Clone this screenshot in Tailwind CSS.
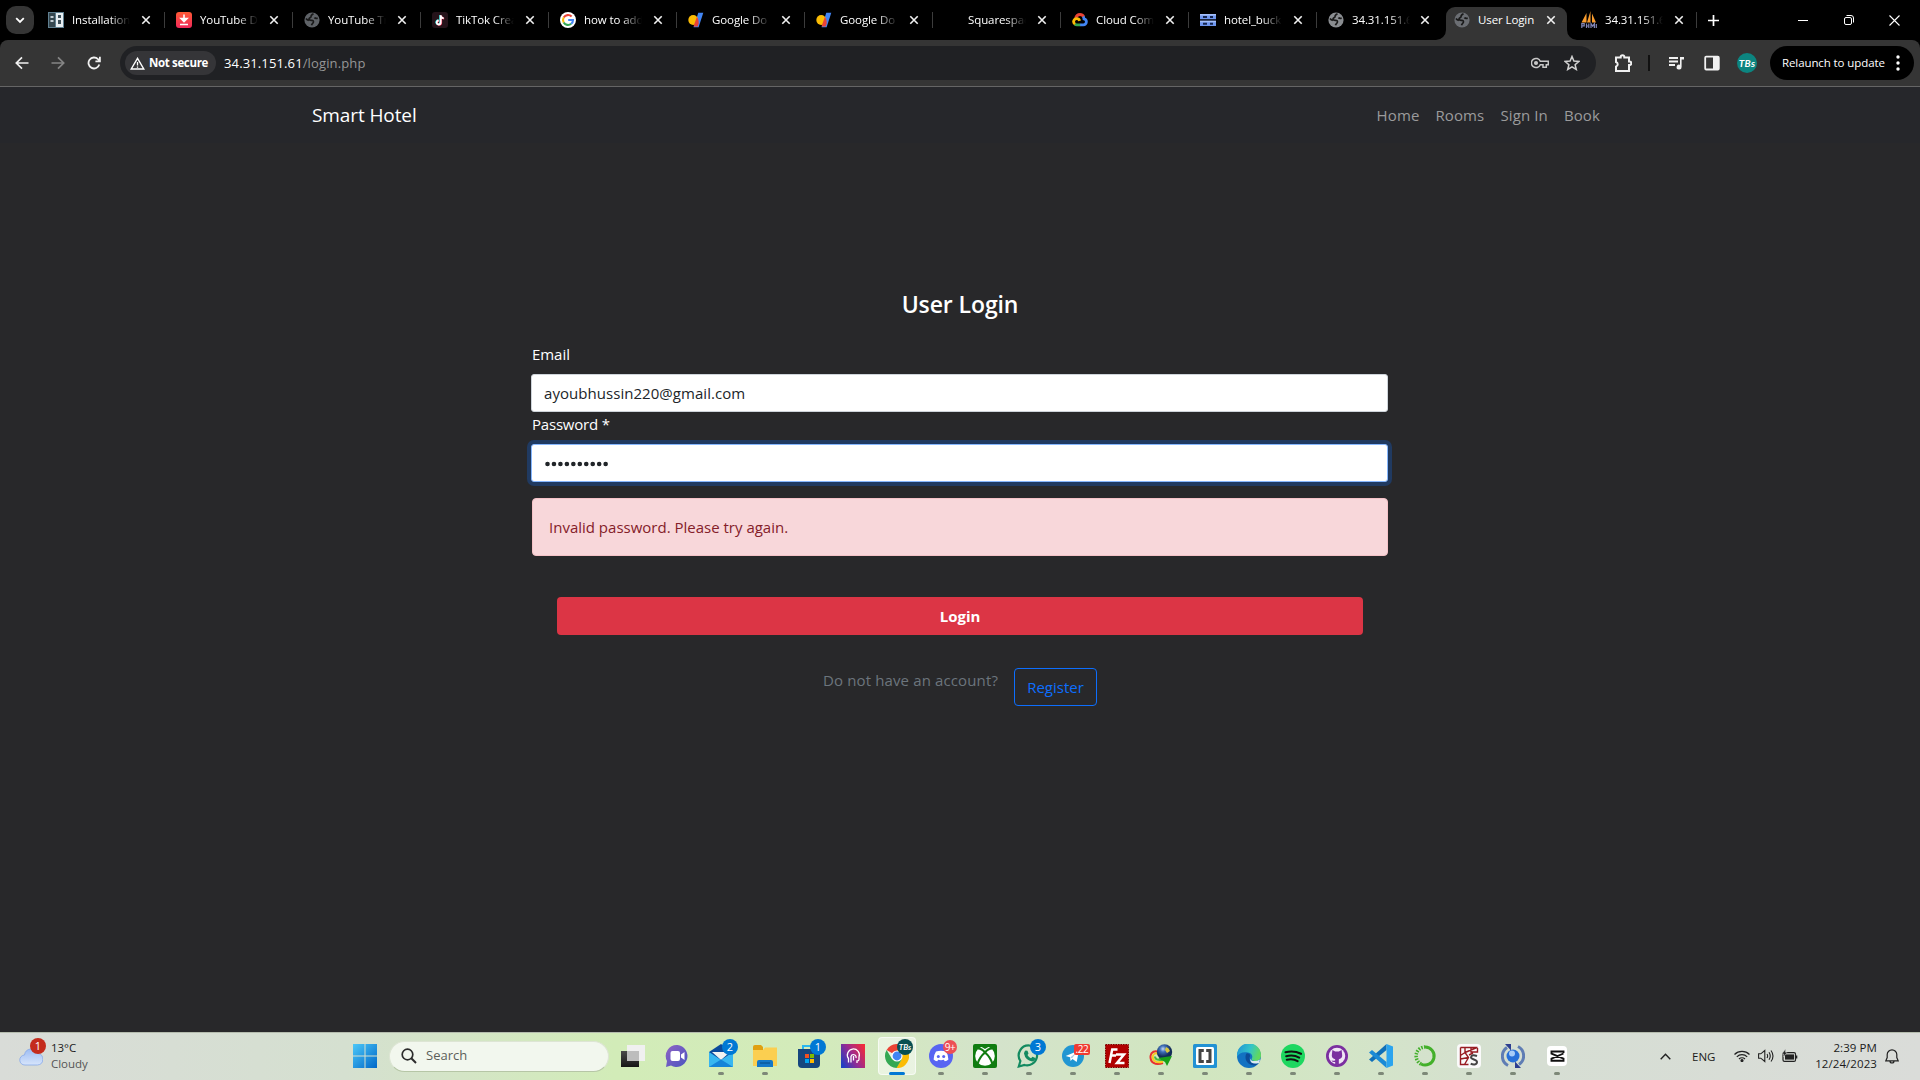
<!DOCTYPE html>
<html lang="en">
<head>
<meta charset="utf-8">
<title>User Login</title>
<script src="https://cdn.jsdelivr.net/npm/@tailwindcss/browser@4"></script>
</head>
<body class="w-[1920px] h-[1080px] overflow-hidden flex flex-col bg-[#28282a] font-['Open_Sans',sans-serif]">
<svg class="hidden">
  <defs>
    <symbol id="x" viewBox="0 0 10 10"><path d="M1.3 1.3l7.4 7.4M8.7 1.3L1.3 8.7" stroke="#f1f1f1" stroke-width="1.6" fill="none"/></symbol>
    <symbol id="globe" viewBox="0 0 16 16"><circle cx="8" cy="8" r="7.6" fill="currentColor"/><path d="M9.500 1.800c-1.500.7-2.600 1.500-2.300 2.600.3 1-2 1-2.200 2.400-.1 1.300 1 1.600 2.600 1.500 1.500-.1 2 .6 1.800 1.800-.2 1.200-1.500 1.600-1.900 3.200M2 6.500c.8 1.200 1.600 1.700 2.800 1.800M10.500 5.500c.5.9 1.800.9 3.200.6" stroke="#191919" stroke-width="1.700" fill="none"/></symbol>
    <symbol id="domains" viewBox="0 0 16 16"><path d="M10.300.8h5L10.600 15.200H5.600z" fill="#4285f4"/><circle cx="5.200" cy="8" r="4.900" fill="#fbbc04"/><path d="M8.800 4.900l-3.300 9.500h4.200l1-3.200C10.800 8.500 10 6 8.800 4.900z" fill="#ea4335"/></symbol>
  </defs>
</svg>

<!-- Tab strip -->
<header class="h-10 shrink-0 bg-black flex text-white text-[11.5px] tracking-[-0.1px]">
  <div class="w-[37px] pt-[6px] shrink-0 flex justify-end pr-[3px]">
    <div class="w-7 h-7 rounded-[10px] bg-[#353535] flex items-center justify-center"><svg class="w-[10px] h-[10px]" viewBox="0 0 10 10"><path d="M1.200 3.200L5 7l3.800-3.800" stroke="#fff" stroke-width="1.800" fill="none"/></svg></div>
  </div>
  <div class="w-[128px] h-10 shrink-0 pl-[11px] flex items-center relative">
    <svg class="w-4 h-4 shrink-0" viewBox="0 0 16 16"><path fill="#5f7f90" d="M0 0h16v16H0z"/><path d="M1 1h6v14H1z" fill="#35474f"/><path d="M8 1h7v14H8z" fill="#e8eef2"/><path d="M2.500 4h3v2h-3zm0 4h3v2h-3z" fill="#c3ced5"/><path d="M10 3h3v3h-3zm0 5h3v4h-3z" fill="#3d4f58"/></svg>
    <span class="ml-2 w-[58px] overflow-hidden whitespace-nowrap [mask-image:linear-gradient(to_right,black_65%,transparent)]">Installation</span>
    <svg class="w-[10px] h-[10px] shrink-0 ml-[11px]"><use href="#x"/></svg><i class="absolute right-0 top-3 w-px h-4 bg-[#3c3c3c]"></i>
  </div>
  <div class="w-[128px] h-10 shrink-0 pl-[11px] flex items-center relative">
    <svg class="w-4 h-4 shrink-0" viewBox="0 0 16 16"><defs><linearGradient id="dl" x2="0" y2="1"><stop stop-color="#ff5a35"/><stop offset="1" stop-color="#f0285a"/></linearGradient></defs><rect width="16" height="16" rx="3" fill="url(#dl)"/><path d="M8 2.500v6M5 6.500l3 3 3-3zM4 12.500h8" stroke="#fff" stroke-width="1.600" fill="#fff"/></svg>
    <span class="ml-2 w-[58px] overflow-hidden whitespace-nowrap [mask-image:linear-gradient(to_right,black_65%,transparent)]">YouTube D</span>
    <svg class="w-[10px] h-[10px] shrink-0 ml-[11px]"><use href="#x"/></svg><i class="absolute right-0 top-3 w-px h-4 bg-[#3c3c3c]"></i>
  </div>
  <div class="w-[128px] h-10 shrink-0 pl-[11px] flex items-center relative">
    <svg class="w-4 h-4 shrink-0 text-[#5f6368]"><use href="#globe"/></svg>
    <span class="ml-2 w-[58px] overflow-hidden whitespace-nowrap [mask-image:linear-gradient(to_right,black_65%,transparent)]">YouTube Tr</span>
    <svg class="w-[10px] h-[10px] shrink-0 ml-[11px]"><use href="#x"/></svg><i class="absolute right-0 top-3 w-px h-4 bg-[#3c3c3c]"></i>
  </div>
  <div class="w-[128px] h-10 shrink-0 pl-[11px] flex items-center relative">
    <svg class="w-4 h-4 shrink-0" viewBox="0 0 16 16"><rect width="16" height="16" rx="3" fill="#25131a"/><g fill="none" stroke-width="1.800"><path d="M8.200 3v7.200a2 2 0 1 1-2-2M8.200 3.500c.2 1.600 1.400 2.500 3 2.600" stroke="#25f4ee"/><path d="M9.200 3.600v7.200a2 2 0 1 1-2-2M9.200 4c.2 1.600 1.400 2.500 3 2.600" stroke="#fe2c55"/><path d="M8.700 3.200v7.300a2 2 0 1 1-2-2M8.700 3.700c.2 1.600 1.400 2.500 3 2.600" stroke="#fff"/></g></svg>
    <span class="ml-2 w-[58px] overflow-hidden whitespace-nowrap [mask-image:linear-gradient(to_right,black_65%,transparent)]">TikTok Crea</span>
    <svg class="w-[10px] h-[10px] shrink-0 ml-[11px]"><use href="#x"/></svg><i class="absolute right-0 top-3 w-px h-4 bg-[#3c3c3c]"></i>
  </div>
  <div class="w-[128px] h-10 shrink-0 pl-[11px] flex items-center relative">
    <svg class="w-4 h-4 shrink-0" viewBox="0 0 16 16"><circle cx="8" cy="8" r="8" fill="#fff"/><g fill="none" stroke-width="2.100"><path d="M11.600 4.600A5 5 0 0 0 3.700 5.500" stroke="#ea4335"/><path d="M3.700 5.500a5 5 0 0 0 0 5" stroke="#fbbc05"/><path d="M3.700 10.500a5 5 0 0 0 7.500 1.300" stroke="#34a853"/><path d="M11.200 11.800A5 5 0 0 0 13 8H8.200" stroke="#4285f4"/></g></svg>
    <span class="ml-2 w-[58px] overflow-hidden whitespace-nowrap [mask-image:linear-gradient(to_right,black_65%,transparent)]">how to add</span>
    <svg class="w-[10px] h-[10px] shrink-0 ml-[11px]"><use href="#x"/></svg><i class="absolute right-0 top-3 w-px h-4 bg-[#3c3c3c]"></i>
  </div>
  <div class="w-[128px] h-10 shrink-0 pl-[11px] flex items-center relative">
    <svg class="w-4 h-[18px] shrink-0"><use href="#domains"/></svg>
    <span class="ml-2 w-[58px] overflow-hidden whitespace-nowrap [mask-image:linear-gradient(to_right,black_65%,transparent)]">Google Do</span>
    <svg class="w-[10px] h-[10px] shrink-0 ml-[11px]"><use href="#x"/></svg><i class="absolute right-0 top-3 w-px h-4 bg-[#3c3c3c]"></i>
  </div>
  <div class="w-[128px] h-10 shrink-0 pl-[11px] flex items-center relative">
    <svg class="w-4 h-[18px] shrink-0"><use href="#domains"/></svg>
    <span class="ml-2 w-[58px] overflow-hidden whitespace-nowrap [mask-image:linear-gradient(to_right,black_65%,transparent)]">Google Do</span>
    <svg class="w-[10px] h-[10px] shrink-0 ml-[11px]"><use href="#x"/></svg><i class="absolute right-0 top-3 w-px h-4 bg-[#3c3c3c]"></i>
  </div>
  <div class="w-[128px] h-10 shrink-0 pl-[11px] flex items-center relative">
    <span class="w-4 h-4 shrink-0"></span>
    <span class="ml-2 w-[58px] overflow-hidden whitespace-nowrap [mask-image:linear-gradient(to_right,black_65%,transparent)]">Squarespac</span>
    <svg class="w-[10px] h-[10px] shrink-0 ml-[11px]"><use href="#x"/></svg><i class="absolute right-0 top-3 w-px h-4 bg-[#3c3c3c]"></i>
  </div>
  <div class="w-[128px] h-10 shrink-0 pl-[11px] flex items-center relative">
    <svg class="w-4 h-4 shrink-0" viewBox="0 0 16 16" fill="none" stroke-width="2.800"><path d="M3.600 6.200C4.300 3.600 6 2.500 8 2.500c1.600 0 3 .8 3.800 2.300" stroke="#ea4335"/><path d="M11.200 4.600c.5.800.7 1.300.8 2.300 1.600.4 2.400 1.500 2.400 2.800 0 1.800-1.400 3.100-3.100 3.100H8" stroke="#4285f4"/><path d="M8.200 12.800H4.800c-.8 0-1.500-.3-2-.7" stroke="#34a853"/><path d="M3 12.200c-1.300-1-1.600-2.400-1.200-3.500C2.300 7.300 3.500 6.600 4.800 6.600c1.500 0 2.500 1 2.800 2.200" stroke="#fbbc05"/></svg>
    <span class="ml-2 w-[58px] overflow-hidden whitespace-nowrap [mask-image:linear-gradient(to_right,black_65%,transparent)]">Cloud Com</span>
    <svg class="w-[10px] h-[10px] shrink-0 ml-[11px]"><use href="#x"/></svg><i class="absolute right-0 top-3 w-px h-4 bg-[#3c3c3c]"></i>
  </div>
  <div class="w-[128px] h-10 shrink-0 pl-[11px] flex items-center relative">
    <svg class="w-4 h-4 shrink-0" viewBox="0 0 16 16"><path d="M0 2h16v5.300H0zM0 8.700h16V14H0z" fill="#6f96ee"/><path d="M0 2h16v1.500H0zM0 8.700h16v1.500H0z" fill="#a5c0fa"/><path d="M3 4h4v2H3zm7 0h3v2h-3zM3 10.700h4v2H3zm7 0h3v2h-3z" fill="#14254f"/></svg>
    <span class="ml-2 w-[58px] overflow-hidden whitespace-nowrap [mask-image:linear-gradient(to_right,black_65%,transparent)]">hotel_buck</span>
    <svg class="w-[10px] h-[10px] shrink-0 ml-[11px]"><use href="#x"/></svg><i class="absolute right-0 top-3 w-px h-4 bg-[#3c3c3c]"></i>
  </div>
  <div class="w-[129px] h-10 shrink-0 pl-[11px] flex items-center">
    <svg class="w-4 h-4 shrink-0 text-[#8a8d91]"><use href="#globe"/></svg>
    <span class="ml-2 w-[58px] overflow-hidden whitespace-nowrap [mask-image:linear-gradient(to_right,black_65%,transparent)]">34.31.151.6</span>
    <svg class="w-[10px] h-[10px] shrink-0 ml-[10px]"><use href="#x"/></svg>
  </div>
  <div class="w-[121px] shrink-0 mt-[7px] h-[33px] pb-[7px] pl-[8px] bg-[#353535] rounded-t-[9px] flex items-center relative">
    <svg class="absolute left-[-10px] bottom-0 w-[10px] h-[10px]" viewBox="0 0 10 10"><path d="M10 0v10H0A10 10 0 0 0 10 0z" fill="#353535"/></svg>
    <svg class="absolute right-[-10px] bottom-0 w-[10px] h-[10px]" viewBox="0 0 10 10"><path d="M0 0v10h10A10 10 0 0 1 0 0z" fill="#353535"/></svg>
    <svg class="w-4 h-4 shrink-0 text-[#6b6e73]"><use href="#globe"/></svg>
    <span class="ml-2 w-[58px] whitespace-nowrap">User Login</span>
    <svg class="w-[10px] h-[10px] shrink-0 ml-[10px]"><use href="#x"/></svg>
  </div>
  <div class="w-[130px] h-10 shrink-0 pl-[14px] flex items-center relative">
    <svg class="w-4 h-[18px] shrink-0" viewBox="0 0 16 18"><path d="M5.500 2v9.500H.5zM9.500 0v11.500H6zM11 2.500l4 9h-4z" fill="#f89c2e"/><path d="M.8 17v-4.300h2.400v2.200H1M5.500 12.500V17m0-2h2.300m0-2.500V17M10 17v-4.300l1.700 2.500 1.700-2.500V17M15.300 17v-4" stroke="#8286b8" stroke-width="1.200" fill="none"/></svg>
    <span class="ml-2 w-[58px] overflow-hidden whitespace-nowrap [mask-image:linear-gradient(to_right,black_65%,transparent)]">34.31.151.6</span>
    <svg class="w-[10px] h-[10px] shrink-0 ml-[11px]"><use href="#x"/></svg><i class="absolute right-0 top-3 w-px h-4 bg-[#3c3c3c]"></i>
  </div>
  <div class="grow h-10 flex items-center pl-[11px]">
    <svg class="w-[11px] h-[11px]" viewBox="0 0 11 11"><path d="M5.500 0v11M0 5.500h11" stroke="#fff" stroke-width="1.700"/></svg>
    <svg class="w-[10px] h-[10px] ml-[79px]" viewBox="0 0 10 10"><path d="M0 5.500h10" stroke="#fff"/></svg>
    <svg class="w-[10px] h-[10px] ml-[36px]" viewBox="0 0 10 10" fill="none" stroke="#fff"><rect x=".5" y="2.500" width="7" height="7" rx="1.500"/><path d="M2.500.5h4.500a2.500 2.500 0 0 1 2.500 2.500v4.500"/></svg>
    <svg class="w-[11px] h-[11px] ml-[35px]" viewBox="0 0 11 11"><path d="M.5.5l10 10M10.500.5l-10 10" stroke="#fff" stroke-width="1.100"/></svg>
  </div>
</header>

<!-- Toolbar -->
<div class="h-[47px] shrink-0 bg-black">
<div class="h-[47px] bg-[#353535] rounded-t-lg border-b border-[#656565] flex items-center">
  <svg class="ml-[15px] w-[14px] h-[14px] shrink-0" viewBox="0 0 14 14" fill="none" stroke="#f1f1f1" stroke-width="1.700"><path d="M13.500 7H1.500M7 1.300L1.300 7 7 12.700"/></svg>
  <svg class="ml-[22px] w-[14px] h-[14px] shrink-0" viewBox="0 0 14 14" fill="none" stroke="#858585" stroke-width="1.700"><path d="M.5 7h12M7 1.300L12.700 7 7 12.700"/></svg>
  <svg class="ml-[22px] w-[14px] h-[14px] shrink-0" viewBox="0 0 14 14" fill="none" stroke="#f1f1f1" stroke-width="1.800"><path d="M12.300 8.500A5.500 5.500 0 1 1 11 3.200l1.700 1.700M12.900.8v4.500H8.400"/></svg>
  <div class="ml-[19px] w-[1476px] h-[34px] rounded-full bg-[#202124] flex items-center shrink-0 text-sm">
    <div class="ml-[5px] w-[91px] h-6 rounded-full bg-[#353538] flex items-center pl-[5px] gap-[4px] shrink-0">
      <svg class="w-[15px] h-[13px]" viewBox="0 0 15 13"><path d="M7.500 1.300L1.200 12h12.600z" fill="none" stroke="#fff" stroke-width="1.400"/><path d="M7.500 5v3.500M7.500 9.500v1.300" stroke="#fff" stroke-width="1.300"/></svg>
      <span class="text-[11.5px] font-bold text-white tracking-[-0.35px] whitespace-nowrap">Not secure</span>
    </div>
    <span class="ml-2 text-[13px] text-white whitespace-nowrap tracking-[0.13px]">34.31.151.61<span class="text-[#969696]">/login.php</span></span>
    <svg class="ml-auto w-[18px] h-[12px]" viewBox="0 0 18 12" fill="none" stroke="#c7c7c7" stroke-width="1.500"><path d="M9.300 4.300A4.600 4.600 0 1 0 9.300 7.700H12v2.600h3.300V7.700h2V4.300z"/><circle cx="5" cy="6" r="1.300" fill="#c7c7c7"/></svg>
    <svg class="ml-[15px] mr-[16px] w-4 h-4" viewBox="0 0 16 16"><path d="M8 1.500l1.900 4.600 4.900.4-3.700 3.200 1.200 4.800L8 11.900l-4.300 2.600 1.200-4.800L1.200 6.500l4.900-.4z" fill="none" stroke="#d0d0d0" stroke-width="1.500"/></svg>
  </div>
  <svg class="ml-[18px] w-[18px] h-[20px]" viewBox="0 0 18 20"><path d="M2 4.500h4.700V4a1.800 1.800 0 0 1 3.600 0v.5H15v4h.5a1.800 1.800 0 0 1 0 3.600H15V18H2v-4.400a2.400 2.400 0 0 0 0-4.600z" fill="none" stroke="#f1f1f1" stroke-width="2"/></svg>
  <i class="ml-[16px] w-[2px] h-4 bg-[#111]"></i>
  <svg class="ml-[18px] w-[17px] h-[15px]" viewBox="0 0 17 15"><path d="M1 2h9M1 5.500h9M1 9h6" stroke="#f1f1f1" stroke-width="1.800"/><path d="M12 1h4v2.500h-2.400V11a2.500 2.500 0 1 1-1.600-2.300z" fill="#f1f1f1"/></svg>
  <svg class="ml-[19px] w-4 h-4" viewBox="0 0 16 16"><rect x="1.200" y="1.700" width="13.600" height="12.800" rx="1" fill="none" stroke="#f1f1f1" stroke-width="1.800"/><path d="M9 1.500h6v13H9z" fill="#f1f1f1"/></svg>
  <div class="ml-[17px] w-5 h-6 flex items-center justify-center relative"><i class="w-5 h-5 rounded-full bg-[#0c8580]"></i><span class="absolute text-white text-[10px] font-bold italic tracking-[0.3px] font-['Lato',sans-serif]">TBs</span></div>
  <div class="ml-[13px] w-36 h-[34px] rounded-full bg-black text-white flex items-center pl-3">
    <span class="text-[11.5px] whitespace-nowrap tracking-[-0.1px]">Relaunch to update</span>
    <svg class="ml-auto mr-[14px] w-1 h-4" viewBox="0 0 4 16" fill="#fff"><circle cx="2" cy="2" r="1.700"/><circle cx="2" cy="8" r="1.700"/><circle cx="2" cy="14" r="1.700"/></svg>
  </div>
</div>
</div>

<!-- Site navigation -->
<nav class="h-14 shrink-0 bg-[#26272b] flex items-center justify-between pl-[312px] pr-[320px] pt-px">
  <a class="text-[19px] text-white tracking-[-0.1px]">Smart Hotel</a>
  <div class="flex gap-4 text-[15px] text-[#9b9b9c] tracking-[0.12px]"><a>Home</a><a>Rooms</a><a>Sign In</a><a>Book</a></div>
</nav>

<!-- Login form -->
<main class="grow flex flex-col items-center">
  <h1 class="mt-[142px] h-9 leading-9 text-[23px] font-semibold text-white tracking-[-0.1px] pt-px">User Login</h1>
  <form class="w-[858px] pr-px flex flex-col">
    <label class="mt-[21px] h-6 leading-6 pl-px text-[15px] text-white tracking-[-0.05px]">Email</label>
    <div class="mt-[8px] h-[38px] rounded-[3px] bg-white border border-[#ced4da] px-3 leading-9 text-[15px] text-[#212529] tracking-[0.05px]">ayoubhussin220@gmail.com</div>
    <label class="h-6 leading-6 pl-px text-[15px] text-white tracking-[-0.2px]">Password *</label>
    <div class="mt-[8px] h-[38px] rounded-[3px] bg-white border border-[#86b7fe] ring-4 ring-[#203a61] px-[13px] pt-[2px] flex items-center">
      <svg class="w-[64px] h-[6px]" viewBox="0 0 64 6"><path d="M2.500 3h60" stroke="#212529" stroke-width="4.600" stroke-linecap="round" stroke-dasharray="0.010 6.450"/></svg>
    </div>
    <div class="mt-4 ml-px h-[58px] rounded bg-[#f8d7da] border border-[#f5c2c7] px-4 leading-[56px] text-[15px] text-[#842029]">Invalid password. Please try again.</div>
    <button type="button" class="mt-[41px] ml-[26px] w-[806px] h-[38px] rounded bg-[#dc3545] text-white font-bold text-[15px]">Login</button>
  </form>
  <div class="mt-[33px] flex justify-center text-[15px]">
    <p class="h-6 leading-6 text-[#6c757d] mr-4 w-[175px] whitespace-nowrap tracking-[0.13px]">Do not have an account?</p>
    <a class="w-[83px] h-[38px] leading-9 rounded border border-[#0d6efd] text-[#0d6efd] text-center">Register</a>
  </div>
</main>

<!-- Taskbar -->
<footer class="h-12 shrink-0 border-t border-[#b5bcae] bg-[linear-gradient(90deg,#d9dcd8_0%,#d5e0d0_18%,#d4e5c6_24%,#d2ecb8_32%,#d3ebba_42%,#d4e3cb_52%,#d1e6bf_62%,#d3e5c7_70%,#d6ded3_80%,#dadcd9_100%)] flex items-center text-[#1b1b1b] pb-px">
  <div class="w-[343px] shrink-0 flex items-center pl-[19px]">
    <div class="relative w-7 h-9">
      <svg class="absolute left-0 top-2 w-6 h-5" viewBox="0 0 24 20"><defs><linearGradient id="cl" x2="0" y2="1"><stop stop-color="#9dbcf2"/><stop offset="1" stop-color="#d7e5fb"/></linearGradient></defs><path d="M6 19a5 5 0 0 1-.5-10A7 7 0 0 1 19 7.500 5.800 5.800 0 0 1 18.500 19z" fill="url(#cl)" stroke="#86a8ea" stroke-width=".8"/></svg>
      <span class="absolute left-[11px] top-0 w-4 h-4 rounded-full bg-[#c42b1c] text-white text-[11px] leading-4 text-center">1</span>
    </div>
    <div class="ml-1 text-[11.5px] leading-4 tracking-[-0.05px]"><div>13°C</div><div class="text-[#555]">Cloudy</div></div>
  </div>
  <div class="w-11 flex justify-center shrink-0"><svg class="w-6 h-6" viewBox="0 0 24 24"><defs><linearGradient id="win" x2="1" y2="1"><stop stop-color="#4cc8f8"/><stop offset="1" stop-color="#0067c8"/></linearGradient></defs><path d="M0 0h11.500v11.500H0zM12.500 0H24v11.500H12.500zM0 12.500h11.500V24H0zM12.500 12.500H24V24H12.500z" fill="url(#win)"/></svg></div>
  <div class="ml-[2px] w-[220px] h-[31px] shrink-0 rounded-full bg-[#f2f7ee] border border-[#dde5d4] border-b-[#b6c6a6] flex items-center">
    <svg class="ml-[11px] w-4 h-4" viewBox="0 0 16 16" fill="none" stroke="#2c2c2c" stroke-width="1.700"><circle cx="6.500" cy="6.500" r="5.300"/><path d="M10.300 10.300L15 15" stroke-width="2"/></svg>
    <span class="ml-[9px] text-[13px] text-[#5c5f5a]">Search</span>
  </div>
  <div class="flex ml-[2px] h-[46px] text-[11px]">
    <div class="w-11 flex justify-center items-center"><svg class="w-6 h-6" viewBox="0 0 24 24"><defs><linearGradient id="tv" x2="0" y2="1"><stop stop-color="#4a4a4a"/><stop offset="1" stop-color="#151515"/></linearGradient></defs><path d="M0 7h18v16H0z" fill="url(#tv)"/><path d="M6 1h18v16H6z" fill="#f0f0f0"/><path d="M6 7h12v10H6z" fill="#bdbdbd"/></svg></div>
    <div class="w-11 flex justify-center items-center"><svg class="w-6 h-6" viewBox="0 0 24 24"><defs><linearGradient id="ch" x2="1" y2="1"><stop stop-color="#8f62c4"/><stop offset="1" stop-color="#4a55c0"/></linearGradient></defs><path d="M12.500 1A11 11 0 1 1 6 21.500L1 23l1-6A11 11 0 0 1 12.500 1z" fill="url(#ch)"/><rect x="5.500" y="7" width="9.500" height="10" rx="2" fill="#fff"/><path d="M16 10.500l3.500-2.500v8L16 13.500z" fill="#fff"/></svg></div>
    <div class="w-11 flex justify-center items-center relative"><svg class="w-6 h-6" viewBox="0 0 24 24"><path d="M0 8L12 0l12 8v14H0z" fill="#0b4a9c"/><path d="M3 8h18l-9 8z" fill="#f2f2f2"/><path d="M0 8l12 8 12-8v15H0z" fill="#38b6f0"/><path d="M0 23l12-7.500L24 23z" fill="#1583d8"/></svg><span class="absolute left-[23px] top-[6px] w-4 h-4 rounded-full bg-[#0078d4] text-white leading-4 text-center">2</span><i class="absolute bottom-[4px] w-[6px] h-[3px] rounded-full bg-[#7d8878]"></i></div>
    <div class="w-11 flex justify-center items-center relative"><svg class="w-6 h-6" viewBox="0 0 24 24"><path d="M0 3q0-2 2-2h6l2 2v4H0z" fill="#e0a010"/><path d="M0 6h10l2-2.500h12V22H0z" fill="#fbcf50"/><path d="M4 23v-5q0-2 2-2h12q2 0 2 2v5z" fill="#1478c8"/><path d="M7 19h10" stroke="#0a5a9c" stroke-width="1.500"/></svg><i class="absolute bottom-[4px] w-[6px] h-[3px] rounded-full bg-[#7d8878]"></i></div>
    <div class="w-11 flex justify-center items-center relative"><svg class="w-6 h-6" viewBox="0 0 24 24"><path d="M6 6V2h10v4" fill="none" stroke="#2ab8f0" stroke-width="2"/><path d="M1 5h22v15q0 4-4 4H5q-4 0-4-4z" fill="#15467e"/><path d="M8 10h4v4H8z" fill="#f25022"/><path d="M13 10h4v4h-4z" fill="#7fba00"/><path d="M8 15h4v4H8z" fill="#00a4ef"/><path d="M13 15h4v4h-4z" fill="#ffb900"/></svg><span class="absolute left-[23px] top-[6px] w-4 h-4 rounded-full bg-[#0078d4] text-white leading-4 text-center">1</span></div>
    <div class="w-11 flex justify-center items-center"><svg class="w-6 h-6" viewBox="0 0 24 24"><defs><linearGradient id="pk" x1="0" y1=".8" x2="1" y2=".2"><stop stop-color="#1f3fc4"/><stop offset=".5" stop-color="#9a2a90"/><stop offset="1" stop-color="#f02a3c"/></linearGradient></defs><path d="M0 0h24v24H0z" fill="url(#pk)"/><path d="M7.500 18.500v-4a6 6 0 1 1 10.500-1.500v2.500q0 1.500-2 1.500v2M10 18.500v-6a2.600 2.600 0 1 1 5 1.500M12.500 12v4.500" fill="none" stroke="#fff" stroke-width="1.300"/></svg></div>
    <div class="w-11 flex justify-center items-center relative"><i class="absolute left-[3px] top-1 w-[38px] h-[38px] rounded bg-white/50 border border-white/60"></i><svg class="w-6 h-6 relative" viewBox="0 0 24 24"><path d="M12 12L1.600 6A12 12 0 0 1 22.400 6z" fill="#ea4335"/><path d="M22.400 6H12v6l5 3-6 9A12 12 0 0 0 22.400 6z" fill="#fbbc05"/><path d="M1.600 6A12 12 0 0 0 11.500 24L17 15l-5 2-5-2z" fill="#34a853"/><circle cx="12" cy="12" r="5.600" fill="#fff"/><circle cx="12" cy="12" r="4.400" fill="#4285f4"/></svg><span class="absolute left-[22px] top-[6px] w-4 h-4 rounded-full bg-[#084f52] text-white text-[8px] font-bold italic leading-4 text-center font-['Lato',sans-serif]">TBs</span><i class="absolute bottom-[4px] w-4 h-[3px] rounded-full bg-[#0078d4]"></i></div>
    <div class="w-11 flex justify-center items-center relative"><svg class="w-6 h-6" viewBox="0 0 24 24"><circle cx="12" cy="12" r="12" fill="#5865f2"/><path d="M7 7.500q5-1.600 10 0 2.400 3.500 2.400 8-1.600 1.400-3.600 1.800l-1-1.500q-2.800.7-5.600 0l-1 1.500q-2-.4-3.600-1.800 0-4.500 2.400-8z" fill="#fff"/><circle cx="9.300" cy="12.500" r="1.500" fill="#5865f2"/><circle cx="14.700" cy="12.500" r="1.500" fill="#5865f2"/></svg><span class="absolute left-[24px] top-[7px] w-[14px] h-[14px] rounded-full bg-[#ed4f55] text-white text-[10px] leading-[14px] text-center tracking-[-0.5px]">9+</span><i class="absolute bottom-[4px] w-[6px] h-[3px] rounded-full bg-[#7d8878]"></i></div>
    <div class="w-11 flex justify-center items-center relative"><svg class="w-6 h-6" viewBox="0 0 24 24"><rect width="24" height="24" rx="2" fill="#107c10"/><circle cx="12" cy="12" r="9.800" fill="#fff"/><path d="M4.500 20C6 15 9 11 12 8.500c3 2.500 6 6.500 7.500 11.500M5 4.500c3 0 5.500 2 7 4 1.500-2 4-4 7-4" stroke="#107c10" stroke-width="2.200" fill="none"/><path d="M6.500 2.500Q9 2.500 12 5q3-2.500 5.500-2.500L12 .8z" fill="#107c10"/></svg><i class="absolute bottom-[4px] w-[6px] h-[3px] rounded-full bg-[#7d8878]"></i></div>
    <div class="w-11 flex justify-center items-center relative"><svg class="w-6 h-6" viewBox="0 0 24 24"><path d="M12.500 1.500A10 10 0 1 1 7.500 21L1.800 22.500 3.400 17A10 10 0 0 1 12.500 1.500z" fill="none" stroke="#138a60" stroke-width="2.200"/><path d="M8.500 6.500l2 .3 1 2.700-1 1.500q1.300 2.500 3.500 3.300l1.500-1.500 2.800 1.300q0 3-3 3.400-7-1.200-8.300-8 .2-2.200 1.500-3z" fill="#138a60"/></svg><span class="absolute left-[23px] top-[6px] w-4 h-4 rounded-full bg-[#0078d4] text-white leading-4 text-center">3</span><i class="absolute bottom-[4px] w-[6px] h-[3px] rounded-full bg-[#7d8878]"></i></div>
    <div class="w-11 flex justify-center items-center relative"><svg class="w-[22px] h-[22px]" viewBox="0 0 24 24"><circle cx="12" cy="12" r="12" fill="#2196d2"/><path d="M4 12l14.500-6L16 18.500l-4.500-3.300-2.200 2.200-.5-4z" fill="#fff"/><path d="M9 13.500l7-5.500-5 6.500z" fill="#a8cde6"/></svg><span class="absolute left-[23px] top-[11px] w-4 h-[11px] rounded-[2px] bg-[#f03c32] text-white text-[10px] leading-[11px] text-center tracking-[-0.4px]">.22</span><i class="absolute bottom-[4px] w-[6px] h-[3px] rounded-full bg-[#7d8878]"></i></div>
    <div class="w-11 flex justify-center items-center relative"><svg class="w-6 h-6" viewBox="0 0 24 24"><path d="M.5.5h23v23H.5z" fill="#b00000" stroke="#7c0000" stroke-dasharray="1.500 1"/><path d="M12.500 5.500H7.200L4.500 19M6 11.500h5M11 10.500h8L12 19h7.500" fill="none" stroke="#fff" stroke-width="2.500"/></svg><i class="absolute bottom-[4px] w-[6px] h-[3px] rounded-full bg-[#7d8878]"></i></div>
    <div class="w-11 flex justify-center items-center relative"><svg class="w-6 h-6" viewBox="0 0 24 24"><defs><radialGradient id="gl" cx=".4" cy=".3"><stop stop-color="#c6d8f4"/><stop offset=".4" stop-color="#4070b8"/><stop offset="1" stop-color="#142c58"/></radialGradient></defs><g fill="none" stroke-width="2"><path d="M14 19C6 22 1 18 1.500 12 2 8 6 6 10 8" stroke="#e83030"/><path d="M14 17.500C7 20 3.500 16 3.700 12.500 4 9.500 7 8.500 10 10" stroke="#f5cb20"/><path d="M14 15.500c-4 1.500-8 0-8-3" stroke="#48b840"/></g><circle cx="15.500" cy="8" r="7.700" fill="url(#gl)"/><path d="M17 3q3 1 4 4l-3 2-2-3z" fill="#d8c840"/><path d="M9 14l14-2-5 10-2-4z" fill="#18a018"/></svg><i class="absolute bottom-[4px] w-[6px] h-[3px] rounded-full bg-[#7d8878]"></i></div>
    <div class="w-11 flex justify-center items-center relative"><svg class="w-6 h-6" viewBox="0 0 24 24"><rect width="24" height="24" rx="1.500" fill="#2292d4"/><rect x="3" y="3" width="18" height="18" rx="1.500" fill="#fff"/><path d="M10.800 6.500H7v11h3.800M13.200 6.500H17v11h-3.800" fill="none" stroke="#444" stroke-width="3"/></svg><i class="absolute bottom-[4px] w-[6px] h-[3px] rounded-full bg-[#7d8878]"></i></div>
    <div class="w-11 flex justify-center items-center relative"><svg class="w-6 h-6" viewBox="0 0 24 24"><defs><linearGradient id="e1" x2="1" y2=".3"><stop stop-color="#1d8fd8"/><stop offset=".6" stop-color="#33c4c8"/><stop offset="1" stop-color="#60d860"/></linearGradient></defs><circle cx="12" cy="12" r="12" fill="#1272c2"/><path d="M0 11A12 12 0 0 1 24 11.500c0 4-3 5.500-6 5.500-3.500 0-4-1.500-3-3 1-2-.5-5-4-5.500C6 7.500 1.500 9 0 13z" fill="url(#e1)"/><path d="M9 10c-2 6 2 11 8 11.500 2.500 0 4-1.500 5-3-3.500 2-9 1-9.500-3.500-.2-2 1-2.500.5-4S10 8.500 9 10z" fill="#0c4c98"/><path d="M14 14.500q-.8 2.500 3.500 2.600 3 0 5.500-1.500l-1 3.400q-8 2-8.800-3z" fill="#dceaf0"/></svg><i class="absolute bottom-[4px] w-[6px] h-[3px] rounded-full bg-[#7d8878]"></i></div>
    <div class="w-11 flex justify-center items-center relative"><svg class="w-6 h-6" viewBox="0 0 24 24"><circle cx="12" cy="12" r="12" fill="#1ed760"/><path d="M4.500 8.300q8-2.300 15.500 1.500M5.200 12.200q7-2 13 1.400M5.800 15.800q6-1.500 10.800 1.300" fill="none" stroke="#111" stroke-width="2.100" stroke-linecap="round"/></svg><i class="absolute bottom-[4px] w-[6px] h-[3px] rounded-full bg-[#7d8878]"></i></div>
    <div class="w-11 flex justify-center items-center relative"><svg class="w-[22px] h-[22px]" viewBox="0 0 24 24"><circle cx="12" cy="12" r="12" fill="#7b2fa0"/><circle cx="12" cy="12" r="9" fill="#f0e6f5"/><path d="M7 5.500l3 1.500h4l3-1.500.5 4q1 5-3.500 6v6h-4v-3q-3 .8-4-2 2 1 4 .5v-1.500q-4.500-1-3.500-6z" fill="#7b2fa0"/></svg><i class="absolute bottom-[4px] w-[6px] h-[3px] rounded-full bg-[#7d8878]"></i></div>
    <div class="w-11 flex justify-center items-center relative"><svg class="w-6 h-6" viewBox="0 0 24 24"><path d="M17.500 0v6L3 18 0 15.500z" fill="#0f6fb8"/><path d="M0 8.500L3 6l14.500 12v6z" fill="#1b8ad6"/><path d="M17.500 0L24 2.500v19L17.500 24z" fill="#2ba4ee"/></svg><i class="absolute bottom-[4px] w-[6px] h-[3px] rounded-full bg-[#7d8878]"></i></div>
    <div class="w-11 flex justify-center items-center relative"><svg class="w-6 h-6" viewBox="0 0 24 24" fill="none"><path d="M12 3a9 9 0 1 1-4 17" stroke="#43b02a" stroke-width="3"/><path d="M8 20A9 9 0 0 1 12 3" stroke="#43b02a" stroke-width="3.500" stroke-dasharray="1.500 1.300"/></svg><i class="absolute bottom-[4px] w-[6px] h-[3px] rounded-full bg-[#7d8878]"></i></div>
    <div class="w-11 flex justify-center items-center relative"><svg class="w-6 h-6" viewBox="0 0 24 24"><rect width="24" height="24" rx="4" fill="#fafafa"/><path d="M3.500 3.500h17M3.500 3.500v17h8M8 3.500v5l-4.500 3M8 8.500l12-5M8 8.500l3.500 5-4 7M3.500 15l8-1.500M14 4v4h6.500V4M12 11l4-2" fill="none" stroke="#981c22" stroke-width="1.400"/><path d="M20 12q-5.500-2-6 1.300c0 2.700 6 1.700 6 4.700 0 3-4 3-6.300 1.600" fill="none" stroke="#444" stroke-width="2"/></svg><i class="absolute bottom-[4px] w-[6px] h-[3px] rounded-full bg-[#7d8878]"></i></div>
    <div class="w-11 flex justify-center items-center relative"><svg class="w-6 h-6" viewBox="0 0 24 24"><circle cx="12" cy="12" r="6.500" fill="#2870d8"/><circle cx="11" cy="9.500" r="3" fill="#a8ccf8"/><path d="M7 21.500A10.500 10.500 0 0 1 6 3.500" fill="none" stroke="#5f7db4" stroke-width="3"/><path d="M17 2.500a10.500 10.500 0 0 1 1 18" fill="none" stroke="#5f7db4" stroke-width="3"/><path d="M4 0h6v6.500zM20 24h-6v-6.500z" fill="#2c3e90"/></svg><i class="absolute bottom-[4px] w-[6px] h-[3px] rounded-full bg-[#7d8878]"></i></div>
    <div class="w-11 flex justify-center items-center relative"><svg class="w-5 h-5" viewBox="0 0 20 20"><rect width="20" height="20" rx="4" fill="#fff"/><path d="M16.500 7V5.500h-12v2.200l12 5v2h-12v-2l12-5.200" fill="none" stroke="#111" stroke-width="1.900"/></svg><i class="absolute bottom-[4px] w-[6px] h-[3px] rounded-full bg-[#7d8878]"></i></div>
  </div>
  <div class="grow flex items-center pl-[81px]">
    <svg class="w-[11px] h-[7px]" viewBox="0 0 11 7"><path d="M.7 6.200L5.500 1.300l4.800 4.900" fill="none" stroke="#222" stroke-width="1.400"/></svg>
    <span class="ml-[21px] w-6 text-[11.5px] pt-px">ENG</span>
    <svg class="ml-[18px] w-4 h-3" viewBox="0 0 16 12" fill="none" stroke="#222" stroke-width="1.200"><path d="M.5 4.500a10.500 10.500 0 0 1 15 0M2.800 6.800a7.300 7.300 0 0 1 10.400 0M5 9a4.200 4.200 0 0 1 6 0"/><circle cx="8" cy="10.500" r="1" fill="#222"/></svg>
    <svg class="ml-2 w-4 h-[14px]" viewBox="0 0 16 14" fill="none" stroke="#222" stroke-width="1.100"><path d="M.6 4.800v4.400h2.200L6.800 12.500v-11l-4 3.300zM9 5q1.300 2 0 4M11 3.300q2.500 3.700 0 7.400M13 1.500q4 5.500 0 11"/></svg>
    <svg class="ml-2 w-4 h-[14px]" viewBox="0 0 16 14"><rect x="1" y="3.600" width="12.500" height="8.800" rx="1.500" fill="none" stroke="#222" stroke-width="1.200"/><path d="M3 5.400h9v5.200H3z" fill="#222"/><path d="M14.500 6.500v3" stroke="#222" stroke-width="1.600"/><path d="M3.500 0L0 5h2l-.5 3L5 3.500H3.300z" fill="#222" stroke="#dadcd9" stroke-width=".4"/></svg>
    <div class="ml-auto text-right text-[11.5px] leading-4 whitespace-nowrap tracking-[0.08px]"><div>2:39 PM</div><div>12/24/2023</div></div>
    <svg class="ml-[8px] mr-[21px] w-[14px] h-[15px]" viewBox="0 0 14 15" fill="none" stroke="#222" stroke-width="1.200"><path d="M7 .8a4.800 4.800 0 0 0-4.800 4.800v3L.8 11.800h12.400l-1.400-3.200v-3A4.800 4.800 0 0 0 7 .8zM5 12a2 2 0 0 0 4 0"/></svg>
  </div>
</footer>
</body>
</html>
